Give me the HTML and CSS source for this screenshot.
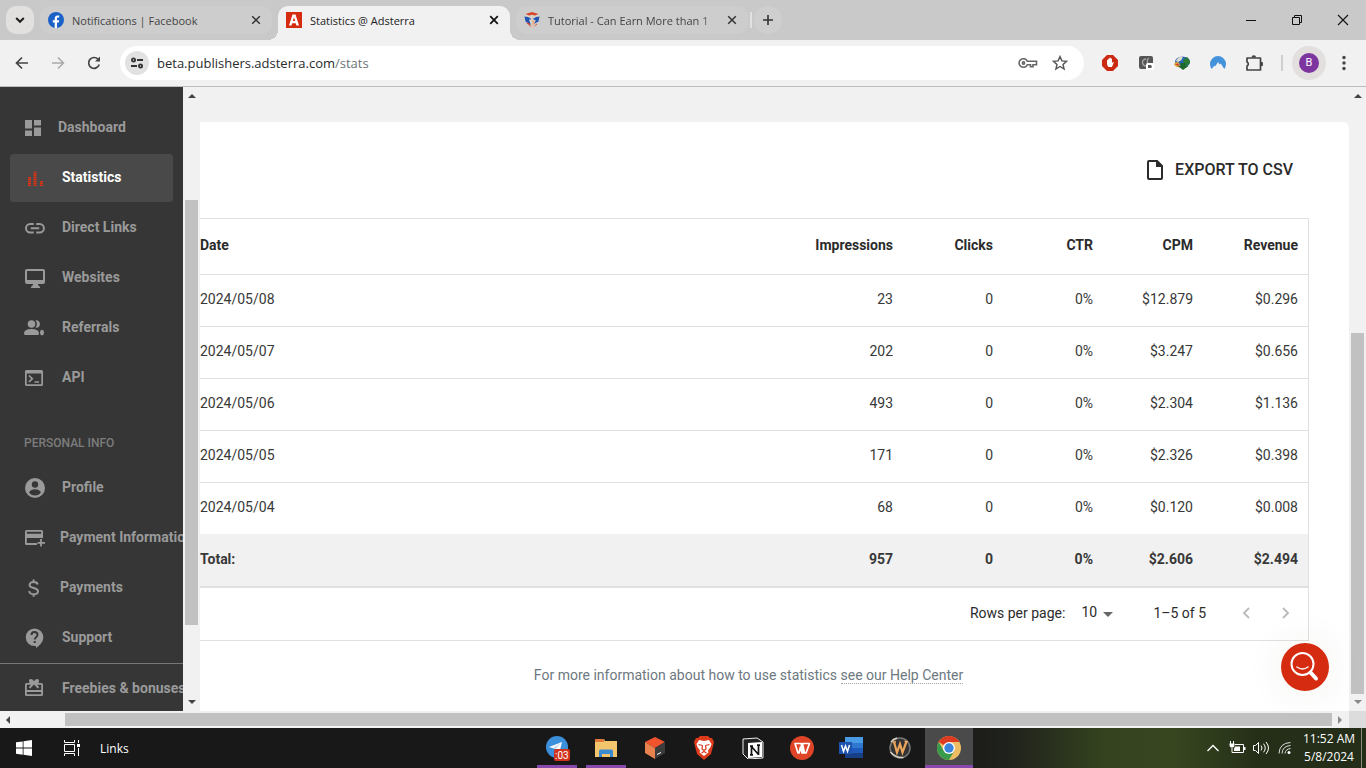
FILE: index.html
```html
<!DOCTYPE html>
<html lang="en">
<head>
<meta charset="utf-8">
<title>Statistics @ Adsterra</title>
<link rel="stylesheet" href="styles.css">
</head>
<body>
<header class="tabstrip">
  <button class="tab-search" aria-label="Search tabs"><svg width="12" height="12" viewBox="0 0 12 12"><path d="M2.2 4l3.800 3.800L9.800 4" fill="none" stroke="#1d1d1d" stroke-width="2"/></svg></button>
  <div class="tab">
    <svg width="16" height="16" viewBox="0 0 16 16"><circle cx="8" cy="8" r="8" fill="#1b62c8"/><path d="M6.700 16v-5.400H4.800V8.200h1.900V6.600c0-2 1.200-3.100 3-3.100.8 0 1.500.1 1.500.1v1.900h-.9c-1 0-1.300.6-1.300 1.200v1.500h2.200l-.4 2.400H9V16z" fill="#fff"/></svg>
    <span class="tab-title">Notifications | Facebook</span>
    <button class="tab-close" aria-label="Close tab"><svg width="10" height="10" viewBox="0 0 10 10"><path d="M1.200 1.200l7.600 7.600M8.800 1.200L1.200 8.800" stroke="#333" stroke-width="1.500"/></svg></button>
  </div>
  <div class="tab tab-active">
    <svg width="16" height="16" viewBox="0 0 16 16"><path d="M0 0h16v16H0z" fill="#d52b10"/><path d="M6.500 2.500h3l3.500 11h-2.600l-.7-2.300H6.200l-.7 2.300H3zM8 5.200L6.800 9.100h2.400z" fill="#fff" fill-rule="evenodd"/></svg>
    <span class="tab-title">Statistics @ Adsterra</span>
    <button class="tab-close" aria-label="Close tab"><svg width="10" height="10" viewBox="0 0 10 10"><path d="M1.200 1.200l7.600 7.600M8.800 1.200L1.200 8.800" stroke="#111" stroke-width="1.700"/></svg></button>
  </div>
  <div class="tab">
    <svg width="16" height="16" viewBox="0 0 16 16"><path d="M8 0l7.500 2.500L15 10l-7 6-7-6L.5 2.500z" fill="#d9d0c8"/><path d="M1.500 2L8 0l6.500 2L11 3.500 8 2.800 5 3.500z" fill="#d8452b"/><path d="M.5 4.500L4 5l3.500 2-2.500.8L7 13 1.500 9.500z" fill="#2156b5"/><path d="M15.500 4.500L12 5 8.800 7l3 1.500L10 12l4.500-2.500z" fill="#2156b5"/><path d="M2 10.500l3 .5 2.500 4.500z" fill="#d8452b"/><path d="M8.500 8l2.500 1.500L8.500 15.500z" fill="#e9a87c"/><path d="M12.500 11.500L9.500 15l3.500-2.500z" fill="#d8452b"/></svg>
    <span class="tab-title tab-title-fade">Tutorial - Can Earn More than 1</span>
    <button class="tab-close" aria-label="Close tab"><svg width="10" height="10" viewBox="0 0 10 10"><path d="M1.200 1.200l7.600 7.600M8.800 1.200L1.200 8.800" stroke="#333" stroke-width="1.500"/></svg></button>
  </div>
  <i class="tab-sep"></i>
  <button class="new-tab" aria-label="New tab"><svg width="12" height="12" viewBox="0 0 12 12"><path d="M6 1v10M1 6h10" stroke="#333" stroke-width="1.600"/></svg></button>
  <div class="window-controls">
    <button aria-label="Minimize"><svg width="10" height="10" viewBox="0 0 10 10"><path d="M0 5.500h10" stroke="#111"/></svg></button>
    <button aria-label="Restore"><svg width="10" height="10" viewBox="0 0 10 10"><path d="M.5 2.500h7v7h-7zM2.500 2.500v-2h7v7h-2" fill="none" stroke="#111"/></svg></button>
    <button aria-label="Close"><svg width="12" height="12" viewBox="0 0 12 12"><path d="M1 1l10 10M11 1L1 11" stroke="#111" stroke-width="1.100"/></svg></button>
  </div>
</header>
<div class="toolbar">
  <button class="tool" aria-label="Back"><svg width="16" height="16" viewBox="0 0 16 16"><path d="M14 8H3M8 2.500L2.500 8 8 13.500" fill="none" stroke="#444" stroke-width="1.700"/></svg></button>
  <button class="tool" aria-label="Forward"><svg width="16" height="16" viewBox="0 0 16 16"><path d="M2 8h11M8 2.500L13.500 8 8 13.500" fill="none" stroke="#a9a9a9" stroke-width="1.500"/></svg></button>
  <button class="tool" aria-label="Reload"><svg width="16" height="16" viewBox="0 0 16 16"><path d="M13.200 9.500A5.400 5.400 0 1 1 12 4.200L13.300 5.600" fill="none" stroke="#444" stroke-width="1.700"/><path d="M14 1.500v5H9z" fill="#444"/></svg></button>
  <div class="omnibox">
    <button class="site-info" aria-label="View site information"><svg width="14" height="12" viewBox="0 0 14 12"><g fill="none" stroke="#333" stroke-width="1.800"><circle cx="3.500" cy="3" r="1.600"/><path d="M7 3h6M1 9h6"/><circle cx="10.500" cy="9" r="1.600"/></g></svg></button>
    <input class="url" type="text" aria-label="Address" value="beta.publishers.adsterra.com"><span class="url-path">/stats</span>
    <span class="grow"></span>
    <button class="omni-btn" aria-label="Passwords"><svg width="20" height="12" viewBox="0 0 20 12"><g fill="none" stroke="#666" stroke-width="1.600"><path d="M9.300 4.300A4.300 4.300 0 1 0 9.300 7.700H12.500V9.700H15V7.700H18.500V4.300z"/><circle cx="5.500" cy="6" r="1.100"/></g></svg></button>
    <button class="omni-btn" aria-label="Bookmark"><svg width="16" height="16" viewBox="0 0 16 16"><path d="M8 1.600l1.900 4.300 4.700.4-3.600 3.100 1.100 4.600L8 11.500 3.900 14 5 9.400 1.400 6.300l4.700-.4z" fill="none" stroke="#555" stroke-width="1.400"/></svg></button>
  </div>
  <button class="tool" aria-label="Ad blocker"><svg width="16" height="16" viewBox="0 0 16 16"><path d="M5 0h6l5 5v6l-5 5H5l-5-5V5z" fill="#cb2a12"/><path d="M5 8.500V5.200q.6-.8 1.200 0V3.800q.6-.8 1.200 0V3q.6-.8 1.300 0v.8q.7-.8 1.300 0V8l.9-1q1-.3.8.5L10 12H6.500Q5 10.500 5 8.500z" fill="#fff"/></svg></button>
  <button class="tool" aria-label="Extension"><svg width="16" height="16" viewBox="0 0 16 16"><rect x="1" y="1" width="14" height="13" rx="2" fill="#555"/><path d="M8 4a3.500 3.500 0 1 0 0 7M11 3q-3 2-1 5" fill="none" stroke="#a5a5a5" stroke-width="1.400"/><rect x="8" y="8" width="8" height="7" rx="1.500" fill="#fff"/><path d="M10 10h3l1 2-1 1h-3z" fill="#555"/></svg></button>
  <button class="tool" aria-label="Download manager"><svg width="16" height="16" viewBox="0 0 16 16"><ellipse cx="8.500" cy="7" rx="7.500" ry="5.500" fill="#2c64b5"/><path d="M2 6q2-5 7-4.500L7.500 5 4 7z" fill="#d9dccf"/><path d="M9 5l4-3q3.500 3 3 6l-3 3-3-2z" fill="#287a34"/><path d="M0 9q2-3 5-1.500l1.500 4.500Q2 13 0 9z" fill="#d9a13a"/><path d="M1.500 9.500L4 8.500l1.500 2.500z" fill="#c33"/><path d="M6.500 8h5v3h3L9 15l-5-4h2.500z" fill="#1f6a2b"/></svg></button>
  <button class="tool" aria-label="VPN"><svg width="16" height="16" viewBox="0 0 16 16"><path d="M1.700 14A8 8 0 1 1 14.300 14L10.700 8.600 9.500 9.600 8 7 5.200 11.500 4.500 10.500z" fill="#4592dc"/></svg></button>
  <button class="tool" aria-label="Extensions"><svg width="18" height="18" viewBox="0 0 18 18"><path d="M2 4H15.500V8V16H2v-4a2.200 2.200 0 0 0 0-4z" fill="none" stroke="#444" stroke-width="1.700" stroke-linejoin="round"/><path d="M6.500 3.500a2.300 2.300 0 0 1 4.600 0zM16 7.700a2.300 2.300 0 0 1 0 4.600z" fill="#444"/></svg></button>
  <i class="tool-sep"></i>
  <button class="avatar" aria-label="Profile B"><span>B</span></button>
  <button class="tool" aria-label="Menu"><svg width="4" height="16" viewBox="0 0 4 16" fill="#444"><circle cx="2" cy="2.500" r="1.700"/><circle cx="2" cy="8" r="1.700"/><circle cx="2" cy="13.500" r="1.700"/></svg></button>
</div>
<div class="page">
  <nav class="sidebar">
    <a class="nav-item" href="#"><svg width="20" height="20" viewBox="0 0 20 20" fill="#9a9a9a"><path d="M1 2h7v8.500H1zM1 12.500h7V18H1zM10 2h7v5.500h-7zM10 9.500h7V18h-7z"/></svg>Dashboard</a>
    <a class="nav-item nav-active" href="#"><svg width="24" height="24" viewBox="0 0 24 24" fill="none" stroke="#dc3216" stroke-width="3" stroke-dasharray="1.500 .5"><path d="M5.500 20v-9M11 20V5.500M17.500 20v-5"/></svg>Statistics</a>
    <a class="nav-item" href="#"><svg width="24" height="24" viewBox="0 0 24 24"><path d="M10 8H6.500a4.200 4.200 0 0 0 0 8.400H10M12.500 8H16a4.200 4.200 0 0 1 0 8.400h-3.500M7 12.200h8.500" fill="none" stroke="#9a9a9a" stroke-width="2" transform="translate(-.3 0)"/></svg>Direct Links</a>
    <a class="nav-item" href="#"><svg width="24" height="24" viewBox="0 0 24 24"><path fill="#9a9a9a" fill-rule="evenodd" d="M3 3h16q2 0 2 2v11q0 2-2 2h-5v1l2 2v1H7v-1l2-2v-1H3q-2 0-2-2V5q0-2 2-2zM3 5v9h16V5z"/></svg>Websites</a>
    <a class="nav-item" href="#"><svg width="24" height="24" viewBox="0 0 24 24" fill="#9a9a9a"><circle cx="7.500" cy="8" r="3.800"/><path d="M0 17.500Q0 13 7.500 13t7.500 4.500q0 1.500-1.500 1.500h-12Q0 19 0 17.500zM11.500 4.200q4-.5 4.500 3.800-.5 4.300-4.500 3.800 2.700-3.800 0-7.600z"/><ellipse cx="18" cy="16.500" rx="2" ry="2.700"/></svg>Referrals</a>
    <a class="nav-item" href="#"><svg width="24" height="24" viewBox="0 0 24 24"><path fill="#9a9a9a" fill-rule="evenodd" d="M2.500 4h15q1.500 0 1.500 1.500v13q0 1.500-1.500 1.500h-15Q1 20 1 18.500v-13Q1 4 2.500 4zM2.700 7.500v10.800h14.600V7.500z"/><path d="M5 9.500l3.300 3.200L5 16M10.500 16H15" fill="none" stroke="#9a9a9a" stroke-width="1.700"/></svg>API</a>
    <h2 class="nav-heading">PERSONAL INFO</h2>
    <a class="nav-item" href="#"><svg width="24" height="24" viewBox="0 0 24 24"><circle cx="11" cy="12" r="10" fill="#9a9a9a"/><circle cx="11" cy="8.500" r="3.200" fill="#363636"/><path d="M5 16.200q2-3 6-3t6 3q-2.200 3.200-6 3.200t-6-3.200z" fill="#363636"/></svg>Profile</a>
    <a class="nav-item" href="#"><svg width="22" height="24" viewBox="0 0 22 24"><path fill="#9a9a9a" fill-rule="evenodd" d="M2.500 4h15Q19 4 19 5.500V12H2.800v5H13v2H2.500Q1 19 1 17.500v-12Q1 4 2.500 4zM2.800 5.700v2h14.400v-2z"/><path d="M17 13v7.500M13.500 16.800h7.500" stroke="#9a9a9a" stroke-width="1.800"/></svg>Payment Information</a>
    <a class="nav-item" href="#"><svg width="22" height="24" viewBox="0 0 22 24"><path d="M13.700 8.500C13.300 6.600 11.700 6 9.600 6 7.300 6 5.600 7 5.600 8.900c0 4.200 8.400 2 8.400 6.300 0 2-1.800 3-4.300 3-2.700 0-4.300-1.200-4.500-3.200M9.600 3.500V6M9.600 18v2.700" fill="none" stroke="#9a9a9a" stroke-width="2"/></svg>Payments</a>
    <a class="nav-item" href="#"><svg width="24" height="24" viewBox="0 0 24 24"><path d="M10.500 2.500a8.800 8.800 0 0 1 8.800 8.800c0 4.400-3.200 8-7.300 10.700v-2h-1.500a8.700 8.700 0 1 1 0-17.500z" fill="#9a9a9a"/><path d="M7.500 9q0-3 3-3t3 2.700c0 2.300-2.500 2.500-2.800 4.800M10.700 15v2" fill="none" stroke="#363636" stroke-width="1.900"/></svg>Support</a>
    <a class="nav-item nav-bottom" href="#"><svg width="24" height="24" viewBox="0 0 24 24"><path fill="#9a9a9a" fill-rule="evenodd" d="M2.500 7h3Q4 3 7 3q1.500 0 3 2.200Q11.500 3 13 3q3 0 1.500 4h3Q19 7 19 8.500v10q0 1.500-1.500 1.500h-15Q1 20 1 18.500v-10Q1 7 2.500 7zM2.800 8.800V14h14.400V8.800h-4l2 2.700-1.400 1L10 8.500l-3.800 4-1.400-1 2-2.700zM2.800 16v2.200h14.400V16z"/></svg>Freebies &amp; bonuses</a>
  </nav>
  <div class="vscroll">
    <svg class="arrow" width="8" height="4" viewBox="0 0 8 4"><path d="M0 4l4-4 4 4z" fill="#444"/></svg>
    <div class="vtrack"><i class="before-side"></i><i class="thumb thumb-side"></i><i class="after-side"></i></div>
    <svg class="arrow" width="8" height="4" viewBox="0 0 8 4"><path d="M0 0l4 4 4-4z" fill="#444"/></svg>
  </div>
  <main class="main">
    <section class="card">
      <div class="card-head">
        <button class="export"><svg width="16" height="20" viewBox="0 0 16 20"><path fill="#2b2b2b" fill-rule="evenodd" d="M2 0h8.500L16 5.500V18q0 2-2 2H2q-2 0-2-2V2q0-2 2-2zM2 2v16h12V7H9V2z"/></svg>EXPORT TO CSV</button>
      </div>
      <div class="table-box">
        <table class="stats">
          <thead><tr><th>Date</th><th>Impressions</th><th>Clicks</th><th>CTR</th><th>CPM</th><th>Revenue</th></tr></thead>
          <tbody>
            <tr><td>2024/05/08</td><td>23</td><td>0</td><td>0%</td><td>$12.879</td><td>$0.296</td></tr>
            <tr><td>2024/05/07</td><td>202</td><td>0</td><td>0%</td><td>$3.247</td><td>$0.656</td></tr>
            <tr><td>2024/05/06</td><td>493</td><td>0</td><td>0%</td><td>$2.304</td><td>$1.136</td></tr>
            <tr><td>2024/05/05</td><td>171</td><td>0</td><td>0%</td><td>$2.326</td><td>$0.398</td></tr>
            <tr><td>2024/05/04</td><td>68</td><td>0</td><td>0%</td><td>$0.120</td><td>$0.008</td></tr>
          </tbody>
          <tfoot><tr><td>Total:</td><td>957</td><td>0</td><td>0%</td><td>$2.606</td><td>$2.494</td></tr></tfoot>
        </table>
        <div class="pager">
          <label for="rows">Rows per page:</label>
          <span class="select-wrap"><select id="rows"><option>10</option></select><svg width="10" height="5" viewBox="0 0 10 5"><path d="M0 0h10L5 5z" fill="#666"/></svg></span>
          <span class="range">1–5 of 5</span>
          <button class="pg" aria-label="Previous page"><svg width="8" height="12" viewBox="0 0 8 12"><path d="M7 1L2 6l5 5" fill="none" stroke="#bbb" stroke-width="1.900"/></svg></button>
          <button class="pg" aria-label="Next page"><svg width="8" height="12" viewBox="0 0 8 12"><path d="M1 1l5 5-5 5" fill="none" stroke="#bbb" stroke-width="1.900"/></svg></button>
        </div>
      </div>
      <p class="help">For more information about how to use statistics <a href="#">see our Help Center</a></p>
    </section>
    <button class="fab" aria-label="Search help"><svg width="48" height="48" viewBox="0 0 48 48" fill="none" stroke="#fff" stroke-linecap="round"><circle cx="21.500" cy="21" r="11" stroke-width="2"/><path d="M16 24q5.500 4 11 0" stroke-width="1.500"/><path d="M29.500 29.500l5.500 6" stroke-width="4"/></svg></button>
  </main>
  <div class="vscroll">
    <svg class="arrow" width="8" height="4" viewBox="0 0 8 4"><path d="M0 4l4-4 4 4z" fill="#444"/></svg>
    <div class="vtrack"><i class="before-main"></i><i class="thumb thumb-main"></i></div>
    <svg class="arrow" width="8" height="4" viewBox="0 0 8 4"><path d="M0 0l4 4 4-4z" fill="#888"/></svg>
  </div>
</div>
<div class="hscroll">
  <svg class="arrow-x" width="4" height="8" viewBox="0 0 4 8"><path d="M4 0L0 4l4 4z" fill="#444"/></svg>
  <div class="htrack"><i class="before-x"></i><i class="thumb thumb-x"></i></div>
  <svg class="arrow-x" width="4" height="8" viewBox="0 0 4 8"><path d="M0 0l4 4-4 4z" fill="#888"/></svg>
  <i class="corner"></i>
</div>
<footer class="taskbar">
  <div class="task-left">
    <button class="task" aria-label="Start"><svg width="16" height="16" viewBox="0 0 16 16" fill="#fff"><path d="M0 2.300L6.700 1.400v6.200H0zM7.500 1.200L16 0v7.600H7.500zM0 8.400h6.700v6.300L0 13.700zM7.500 8.400H16V16l-8.500-1.200z"/></svg></button>
    <button class="task" aria-label="Task view"><svg width="16" height="16" viewBox="0 0 16 16" fill="none" stroke="#fff"><path d="M.5 0v2.500h10V0M.5 16v-2.500h10V16M.5 4.500h10v7H.5zM14.500 0v3M14.500 8v8"/><path d="M13 4h3v3h-3z" fill="#fff" stroke="none"/></svg></button>
    <span class="links">Links</span>
  </div>
  <div class="apps">
    <button class="task task-open" aria-label="Telegram"><svg width="26" height="26" viewBox="0 0 26 26"><circle cx="13" cy="12" r="11" fill="#3c8fdb"/><path d="M5 12l13-5-2.500 10-4-3z" fill="#fff"/><path d="M11.500 14L17 8l-8 5z" fill="#bcd9f2"/><rect x="10" y="14" width="16" height="12" rx="2" fill="#d1321b"/><text x="11" y="24" class="badge-text">:03</text></svg></button>
    <button class="task task-open" aria-label="File Explorer"><svg width="24" height="20" viewBox="0 0 24 20"><path d="M1 1h9l1 2h12v16H1z" fill="#f3c56d"/><path d="M1 1h9v3H1z" fill="#e07a3a"/><path d="M5 19v-6q0-1.500 1.500-1.500h11q1.500 0 1.500 1.500v6h-3v-3H8v3z" fill="#3a8bd0"/></svg></button>
    <button class="task" aria-label="Box app"><svg width="22" height="22" viewBox="0 0 22 22"><path d="M11 0l10 5-10 6L1 5z" fill="#f0532e"/><path d="M1 5l10 6v11L1 16z" fill="#e8834f"/><path d="M21 5l-10 6v11l10-6z" fill="#3b3b3b"/><path d="M13 17.500l4-2" stroke="#fff"/></svg></button>
    <button class="task" aria-label="Brave"><svg width="20" height="24" viewBox="0 0 20 24"><path d="M6 0h8l2 2h2l2 4-.7 3-2.300 9-7 6-7-6-2.300-9L0 6l2-4h2z" fill="#dc3a1a"/><path d="M5 4l5 1 5-1 2.500 4-1 3-2.500 3.500.5 2L10 20l-4.500-3.500.5-2L3.500 11l-1-3z" fill="#fff"/><path d="M4.500 8.500l4 1M15.500 8.500l-4 1M8.500 9.500L8 13l2 1.500 2-1.500-.5-3.500M7.500 17l2.500-1.500 2.500 1.500" fill="none" stroke="#dc3a1a" stroke-width="1.200"/></svg></button>
    <button class="task" aria-label="Notion"><svg width="22" height="22" viewBox="0 0 22 22"><path d="M1 2l14-1 6 4v16L6 22l-5-5z" fill="#222" stroke="#eee"/><path d="M6 6l14-1v15L6 21z" fill="#fff"/><path d="M9.500 18V9.200M9 9l7.500 8.500M16.500 18V8M8 9.200h3M15 8.200h3M8 17.800h3" stroke="#111" stroke-width="1.700"/></svg></button>
    <button class="task" aria-label="WPS Office"><svg width="24" height="24" viewBox="0 0 24 24"><circle cx="12" cy="12" r="12" fill="#df4426"/><path d="M5 7.500h6l2.500 9.500H12l-1.500-6L9 17H8zM12.500 7.500H19.500L16 17h-1.500z" fill="none" stroke="#fff" stroke-width="1.700" stroke-linejoin="round"/></svg></button>
    <button class="task" aria-label="Word"><svg width="24" height="22" viewBox="0 0 24 22"><path d="M6 0h18v6H6z" fill="#4a9be6"/><path d="M6 6h18v5H6z" fill="#2e79cf"/><path d="M6 11h18v5H6z" fill="#1e5bbd"/><path d="M6 16h18v5H6z" fill="#163f86"/><path d="M0 5h13v12H0z" fill="#1d52ae"/><path d="M2.500 8l2 6.500L6.500 9l2 5.500 2-6.500" fill="none" stroke="#fff" stroke-width="1.500"/></svg></button>
    <button class="task" aria-label="W app"><svg width="22" height="22" viewBox="0 0 22 22"><circle cx="11" cy="11" r="10" fill="#333" stroke="#777" stroke-width="1.500"/><path d="M2 5q2-3 6-4M1.500 15q5 6 13 5.500" fill="none" stroke="#d9d4c4" stroke-width="1.400"/><path d="M5 5l3 10.500L11 7l2.500 8.500L17.500 4.500" fill="none" stroke="#eda55c" stroke-width="2.200"/><path d="M3.500 5H7M15.500 4.500H19" stroke="#eda55c" stroke-width="1.300"/></svg></button>
    <button class="task task-active" aria-label="Chrome"><svg width="24" height="24" viewBox="0 0 24 24"><circle cx="12" cy="12" r="12" fill="#eebd63"/><path d="M12 12L1.600 6A12 12 0 0 1 22.400 6H12z" fill="#dc3b22"/><path d="M1.600 6A12 12 0 0 0 12 24l5.200-9L12 12 6.800 15z" fill="#3a9a4b"/><circle cx="12" cy="12" r="6" fill="#fff"/><circle cx="12" cy="12" r="4.700" fill="#3a83dd"/></svg></button>
  </div>
  <div class="tray">
    <button class="tray-btn" aria-label="Show hidden icons"><svg width="12" height="8" viewBox="0 0 12 8"><path d="M0.500 7L6 1.500 11.500 7" fill="none" stroke="#fff" stroke-width="1.300"/></svg></button>
    <button class="tray-btn" aria-label="Battery"><svg width="17" height="14" viewBox="0 0 17 14"><path d="M6 3.500h8.500v8H3V7" fill="none" stroke="#fff"/><path d="M15 6h1.500v3H15zM6 5.500h5v4.500H5V8zM.5 2.500h5v2q0 2-2.500 2.300Q.5 6.500.5 4.500z" fill="#fff"/><path d="M1.500 0v3M4.500 0v3" stroke="#fff"/></svg></button>
    <button class="tray-btn" aria-label="Volume"><svg width="17" height="14" viewBox="0 0 17 14" fill="none" stroke="#fff"><path d="M.5 4.500h2l3-3v11l-3-3h-2zM8 4.500q2 2.500 0 5M10.500 2.700q3.500 4.300 0 8.600M13 1q5 6 0 12"/></svg></button>
    <button class="tray-btn" aria-label="Network"><svg width="14" height="14" viewBox="0 0 14 14" fill="none" stroke="#ddd"><path d="M1 12.500Q1.500 2 12.500 1.500M4 12.500Q4.500 5 12.500 4.500M7 12.500q.5-4.500 5.500-5" /><circle cx="11" cy="11.500" r="1.500" fill="#fff" stroke="none"/></svg></button>
    <div class="clock"><span>11:52 AM</span><span>5/8/2024</span></div>
    <i class="desktop-edge"></i>
  </div>
</footer>
</body>
</html>
```
FILE: styles.css
```css
* { box-sizing: border-box; }
body {
  margin: 0;
  height: 100vh;
  display: flex;
  flex-direction: column;
  overflow: hidden;
  font-family: Roboto, "Liberation Sans", sans-serif;
  font-size: 14px;
  color: #2b2b2b;
}
button {
  border: 0;
  padding: 0;
  margin: 0;
  background: none;
  font: inherit;
  color: inherit;
  display: flex;
  align-items: center;
  justify-content: center;
  flex: none;
}
svg { flex: none; display: block; }
i { display: block; }
.grow { flex: 1; }

.tabstrip {
  flex: none;
  height: 40px;
  padding-left: 6px;
  display: flex;
  align-items: center;
  gap: 6px;
  background: #c9c9c9;
  font-family: "Open Sans", sans-serif;
  font-size: 11px;
}
.tab-search { width: 28px; height: 28px; border-radius: 10px; background: #e2e0df; }
.tab {
  position: relative;
  width: 232px;
  height: 28px;
  padding: 0 8px;
  display: flex;
  align-items: center;
  gap: 8px;
  border-radius: 10px;
  background: #cdcdcd;
  color: #444;
}
.tab-active {
  height: 34px;
  padding-bottom: 6px;
  align-self: flex-end;
  border-radius: 10px 10px 0 0;
  background: #f1f1f1;
  color: #222;
}
.tab-active::before, .tab-active::after {
  content: "";
  position: absolute;
  bottom: 0;
  width: 10px;
  height: 10px;
}
.tab-active::before { left: -10px; background: radial-gradient(circle at 0 0, transparent 10px, #f1f1f1 10px); }
.tab-active::after { right: -10px; background: radial-gradient(circle at 100% 0, transparent 10px, #f1f1f1 10px); }
.tab-title { flex: 1; padding-top: 2px; white-space: nowrap; line-height: 20px; }
.tab-title-fade { mask-image: linear-gradient(to right, #000 92%, transparent); }
.tab-close { width: 16px; height: 16px; }
.tab-sep { width: 2px; height: 16px; background: #e2e2e2; margin-left: -4px; }
.new-tab { width: 28px; height: 28px; border-radius: 14px; background: #cecece; margin-left: -4px; }
.window-controls { margin-left: auto; display: flex; height: 100%; }
.window-controls button { width: 46px; }

.toolbar {
  flex: none;
  height: 47px;
  padding: 0 4px;
  display: flex;
  align-items: center;
  background: #f1f1f1;
  border-bottom: 1px solid #bdbdbd;
}
.tool { width: 36px; height: 36px; }
.omnibox {
  flex: 1;
  height: 34px;
  margin: 0 8px;
  padding: 0 8px 0 5px;
  display: flex;
  align-items: center;
  border-radius: 17px;
  background: #fff;
  font-family: "Open Sans", sans-serif;
  font-size: 13px;
  line-height: 20px;
}
.site-info { width: 24px; height: 24px; border-radius: 12px; background: #e2e2e2; margin-right: 8px; }
.url {
  field-sizing: content;
  border: 0;
  padding: 0;
  outline: 0;
  background: none;
  font: inherit;
  color: #2a2a2a;
}
.url-path { color: #6c7378; }
.omni-btn { width: 32px; height: 32px; }
.tool-sep { width: 2px; height: 16px; margin: 0 9px; background: #cfcfcf; }
.avatar { width: 34px; height: 34px; border-radius: 17px; background: #e2dfde; }
.avatar span {
  width: 20px;
  height: 20px;
  border-radius: 10px;
  background: #7d35a0;
  color: #fff;
  font-size: 11px;
  line-height: 20px;
}

.page { flex: 1; min-height: 0; display: flex; background: #f1f1f1; }
.sidebar {
  flex: none;
  width: 183px;
  padding-top: 17px;
  display: flex;
  flex-direction: column;
  gap: 2px;
  overflow: hidden;
  background: #363636;
}
.nav-item {
  flex: none;
  height: 48px;
  margin: 0 10px;
  padding: 0 14px 2px;
  display: flex;
  align-items: center;
  gap: 14px;
  border-radius: 4px;
  color: #9a9a9a;
  font-weight: 700;
  line-height: 20px;
  white-space: nowrap;
  text-decoration: none;
}
.nav-item svg { margin-top: 2px; }
.nav-active { background: #494949; color: #fff; }
.nav-heading {
  flex: none;
  margin: 0;
  padding: 29px 24px 9px;
  font-size: 12px;
  font-weight: 500;
  line-height: 20px;
  color: #7c7c7c;
}
.nav-bottom {
  margin: -1px 0 0;
  padding: 0 24px;
  border-radius: 0;
  border-top: 1px solid #777;
}
.nav-bottom svg { margin-top: 0; }
.vscroll {
  flex: none;
  width: 17px;
  padding: 7px 0;
  display: flex;
  flex-direction: column;
  align-items: center;
  background: #f1f1f1;
}
.vtrack { flex: 1; width: 13px; padding: 6px 0; display: flex; flex-direction: column; }
.thumb { background: #c1c1c1; }
.before-side { flex: 96; }
.thumb-side { flex: 425; }
.after-side { flex: 69; }
.before-main { flex: 229; }
.thumb-main { flex: 361; }
.hscroll { flex: none; height: 17px; display: flex; align-items: center; background: #f1f1f1; }
.arrow-x { margin: 0 7px 0 6px; }
.htrack { flex: 1; height: 13px; display: flex; }
.before-x { flex: 48; }
.thumb-x { flex: 1267; }
.corner { width: 17px; height: 17px; background: #dcdcdc; }

.main { position: relative; flex: 1; padding-top: 35px; display: flex; }
.card {
  flex: 1;
  padding-right: 40px;
  border-top-right-radius: 6px;
  background: #fff;
}
.card-head { height: 96px; padding-right: 16px; display: flex; align-items: center; justify-content: flex-end; }
.export { gap: 12px; font-size: 16px; font-weight: 500; line-height: 24px; }
.table-box { border: 1px solid #e0e0e0; border-left: 0; }
.stats { width: 100%; table-layout: fixed; border-collapse: collapse; }
.stats th, .stats td { height: 52px; padding: 0 10px 2px 0; border-bottom: 1px solid #e0e0e0; text-align: right; }
.stats td { color: #383838; }
.stats th { height: 55px; width: 100px; font-weight: 700; }
.stats th:first-child, .stats td:first-child { width: auto; text-align: left; }
.stats th:nth-child(2) { width: 140px; }
.stats th:last-child { width: 105px; }
.stats tbody tr:last-child td { border-bottom: 0; }
.stats tfoot td { height: 53px; padding-bottom: 3px; background: #f1f1f1; border-bottom: 2px solid #e0e0e0; font-weight: 700; }
.pager { height: 52px; padding: 0 2px 2px 0; display: flex; align-items: center; justify-content: flex-end; }
.select-wrap { position: relative; width: 32px; margin: 0 40px 2px 16px; }
.select-wrap select {
  appearance: none;
  width: 32px;
  border: 0;
  padding: 0;
  background: none;
  font: inherit;
  color: inherit;
}
.select-wrap svg { position: absolute; right: 0; top: 8px; pointer-events: none; }
.range { margin-right: 20px; }
.pg { width: 40px; height: 40px; }
.help { margin: 24px 0 0; padding-right: 12px; text-align: center; line-height: 20px; color: #6d7880; }
.help a { color: inherit; text-decoration: none; border-bottom: 1px dotted #a5a5a5; }
.fab {
  position: absolute;
  right: 20px;
  bottom: 20px;
  width: 48px;
  height: 48px;
  border-radius: 24px;
  background: #d52b10;
  box-shadow: 0 0 40px rgba(60, 60, 30, 0.08);
}

.taskbar {
  flex: none;
  height: 40px;
  display: flex;
  color: #fff;
  font-family: "Open Sans", sans-serif;
  font-size: 12px;
  background: linear-gradient(to right, #181818 0, #181818 68%, #20221c 74%, #35441f 81%, #37461f 86%, #252f18 92%, #232d18);
}
.task-left { width: 533px; display: flex; align-items: center; }
.task { width: 48px; height: 40px; }
.links { padding-left: 4px; }
.apps { display: flex; gap: 1px; }
.task-open { background: linear-gradient(#8748ab, #8748ab) center bottom / 40px 3px no-repeat; }
.task-active { background: #4a4a4a; border-bottom: 3px solid #8748ab; padding-top: 3px; }
.badge-text { font-family: Roboto, sans-serif; font-size: 10px; fill: #fff; }
.tray { margin-left: auto; display: flex; align-items: center; }
.tray-btn { width: 24px; height: 40px; }
.clock { width: 64px; display: flex; flex-direction: column; align-items: center; line-height: 18px; }
.desktop-edge { width: 5px; height: 40px; border-left: 1px solid #8a8f84; }
```
